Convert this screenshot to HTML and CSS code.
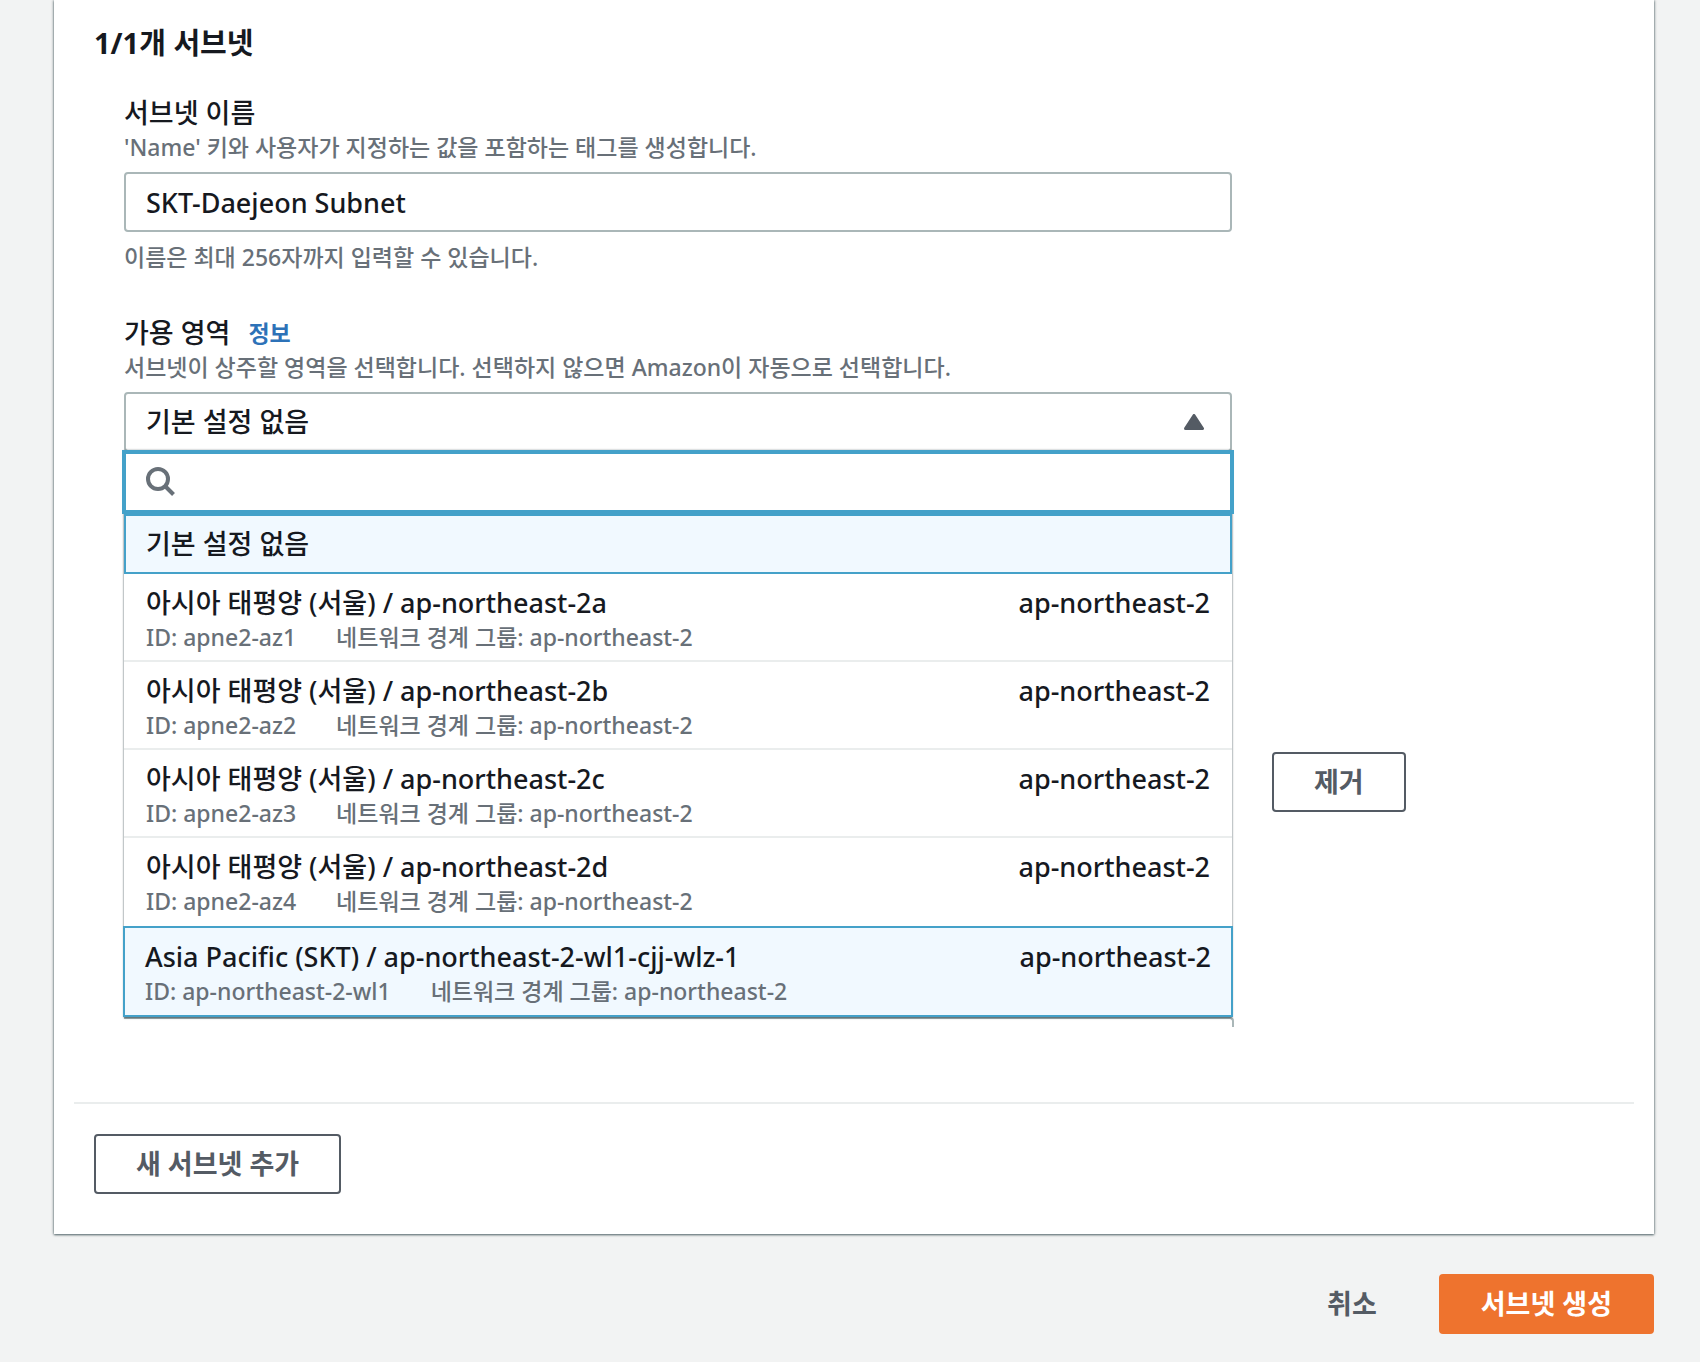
FILE: index.html
```html
<!DOCTYPE html>
<html lang="ko">

<head>
    <meta charset="UTF-8">
    <meta name="viewport" content="width=device-width, initial-scale=1.0">
    <title>서브넷 생성</title>
    <link rel="stylesheet" href="styles.css">
</head>

<body>

    <form class="page">
        <section class="card">
            <h2>1/1개 서브넷</h2>

            <div class="subnet">
                <div class="fields">
                    <!-- Subnet name -->
                    <div class="field">
                        <label for="subnet-name">서브넷 이름</label>
                        <p class="hint">'Name' 키와 사용자가 지정하는 값을 포함하는 태그를 생성합니다.</p>
                        <input class="control" type="text" id="subnet-name" name="subnet_name" value="SKT-Daejeon Subnet">
                        <p class="hint below">이름은 최대 256자까지 입력할 수 있습니다.</p>
                    </div>

                    <!-- Availability zone -->
                    <div class="field">
                        <div class="label-row">
                            <label for="zone">가용 영역</label>
                            <a class="info" href="#">정보</a>
                        </div>
                        <p class="hint">서브넷이 상주할 영역을 선택합니다. 선택하지 않으면 Amazon이 자동으로 선택합니다.</p>
                        <div class="select">
                            <select class="control" id="zone" name="zone">
                                <option>기본 설정 없음</option>
                            </select>
                            <svg class="arrow" viewBox="0 0 20 16" aria-hidden="true">
                                <path d="M10 1.5 18.5 14.5H1.5Z" fill="#545b64" stroke="#545b64" stroke-width="3" stroke-linejoin="round" />
                            </svg>
                        </div>

                        <div class="dropdown">
                            <div class="search">
                                <svg class="search-icon" viewBox="0 0 30 30" aria-hidden="true">
                                    <g fill="none" stroke="#687078" stroke-width="4">
                                        <circle cx="12" cy="12" r="10" />
                                        <path d="M19 19 27.500 27.500" />
                                    </g>
                                </svg>
                                <input type="text" aria-label="가용 영역 검색">
                            </div>
                            <ul class="options" role="listbox" aria-label="가용 영역">
                                <li class="option default" role="option">기본 설정 없음</li>
                                <li class="option" role="option">
                                    <div class="main"><span>아시아 태평양 (서울) / ap-northeast-2a</span><span>ap-northeast-2</span></div>
                                    <div class="tags"><span>ID: apne2-az1</span><span>네트워크 경계 그룹: ap-northeast-2</span></div>
                                </li>
                                <li class="option" role="option">
                                    <div class="main"><span>아시아 태평양 (서울) / ap-northeast-2b</span><span>ap-northeast-2</span></div>
                                    <div class="tags"><span>ID: apne2-az2</span><span>네트워크 경계 그룹: ap-northeast-2</span></div>
                                </li>
                                <li class="option" role="option">
                                    <div class="main"><span>아시아 태평양 (서울) / ap-northeast-2c</span><span>ap-northeast-2</span></div>
                                    <div class="tags"><span>ID: apne2-az3</span><span>네트워크 경계 그룹: ap-northeast-2</span></div>
                                </li>
                                <li class="option" role="option">
                                    <div class="main"><span>아시아 태평양 (서울) / ap-northeast-2d</span><span>ap-northeast-2</span></div>
                                    <div class="tags"><span>ID: apne2-az4</span><span>네트워크 경계 그룹: ap-northeast-2</span></div>
                                </li>
                                <li class="option active" role="option" aria-selected="true">
                                    <div class="main"><span>Asia Pacific (SKT) / ap-northeast-2-wl1-cjj-wlz-1</span><span>ap-northeast-2</span></div>
                                    <div class="tags"><span>ID: ap-northeast-2-wl1</span><span>네트워크 경계 그룹: ap-northeast-2</span></div>
                                </li>
                            </ul>
                        </div>
                        <div class="field-edge"></div>
                    </div>
                </div>

                <div class="row-action">
                    <button class="btn" type="button">제거</button>
                </div>
            </div>

            <div class="card-footer">
                <button class="btn" type="button">새 서브넷 추가</button>
            </div>
        </section>

        <div class="actions">
            <button class="btn link" type="button">취소</button>
            <button class="btn primary" type="submit">서브넷 생성</button>
        </div>
    </form>

</body>

</html>
```
FILE: styles.css
```css
* {
    margin: 0;
    padding: 0;
    box-sizing: border-box;
}

body {
    background-color: #f2f3f3;
    color: #16191f;
    font-family: "Noto Sans", "Noto Sans CJK KR", sans-serif;
    font-size: 27px;
    font-weight: 500;
    line-height: 34px;
}

input,
select,
button {
    font: inherit;
    color: inherit;
}

.page {
    padding: 0 46px 28px 54px;
}

/* Card */
.card {
    padding: 25px 20px 40px;
    background-color: #fff;
    box-shadow: 0 1px 2px rgba(0, 28, 36, 0.5), 0 0 3px rgba(0, 28, 36, 0.5);
}

h2 {
    padding: 0 20px;
    font-size: 29px;
    line-height: 36px;
}

.subnet {
    display: flex;
    gap: 40px;
    padding: 35px 50px 75px;
}

.fields {
    display: flex;
    flex: 1;
    flex-direction: column;
    gap: 42px;
    max-width: 1108px;
}

.row-action {
    padding-top: 656px;
}

/* Fields */
.field label {
    display: block;
}

.label-row {
    display: flex;
    align-items: center;
    gap: 18px;
}

.info {
    color: #2d72b8;
    font-size: 23px;
    font-weight: bold;
    text-decoration: none;
}

.hint {
    color: #687078;
    font-size: 23px;
}

.below {
    margin-top: 8px;
}

.control {
    display: block;
    width: 100%;
    height: 60px;
    margin-top: 8px;
    padding: 0 20px;
    border: 2px solid #aab7b8;
    border-radius: 4px;
    background-color: #fff;
    appearance: none;
}

.select {
    position: relative;
}

.arrow {
    position: absolute;
    top: 22px;
    right: 28px;
    width: 20px;
    height: 16px;
    pointer-events: none;
}

/* Open list */
.dropdown {
    position: relative;
    margin-top: -2px;
    background-color: #fff;
    box-shadow: 0 1px 2px rgba(0, 28, 36, 0.5), 0 0 2px rgba(0, 28, 36, 0.3);
}

.search {
    display: flex;
    align-items: center;
    gap: 12px;
    height: 64px;
    margin: 0 -2px;
    padding: 0 20px;
    border: 4px solid #44a1c9;
    background-color: #fff;
}

.search-icon {
    width: 30px;
    height: 30px;
}

.search input {
    flex: 1;
    border: none;
    outline: none;
    background: none;
}

.options {
    list-style: none;
}

.option {
    padding: 12px 22px 6px;
    border-bottom: 2px solid #eaeded;
}

.option:nth-last-child(2) {
    border-bottom-color: #fff;
}

.default {
    padding: 11px 20px;
    border: 2px solid #44a1c9;
    background-color: #f1f9ff;
}

.active {
    margin: 0 -1px;
    padding: 12px 20px 7px;
    border: 2px solid #44a1c9;
    background-color: #f1f9ff;
}

.main {
    display: flex;
    justify-content: space-between;
}

.tags {
    display: flex;
    gap: 40px;
    color: #687078;
    font-size: 23px;
}

/* Top of the next field, cut off under the list */
.field-edge {
    height: 10px;
    margin-right: -2px;
    border-top: 2px solid #aab7b8;
    border-right: 2px solid #aab7b8;
    border-top-right-radius: 4px;
}

/* Buttons */
.btn {
    height: 60px;
    padding: 0 40px;
    border: 2px solid #545b64;
    border-radius: 4px;
    background-color: #fff;
    color: #545b64;
    font-weight: bold;
    white-space: nowrap;
    cursor: pointer;
}

.primary {
    border-color: #ee732e;
    background-color: #ee732e;
    color: #fff;
}

.link {
    border-color: transparent;
    background: none;
}

.card-footer {
    padding: 30px 20px 0;
    border-top: 2px solid #eaeded;
}

.actions {
    display: flex;
    justify-content: flex-end;
    gap: 20px;
    margin-top: 40px;
}
```
